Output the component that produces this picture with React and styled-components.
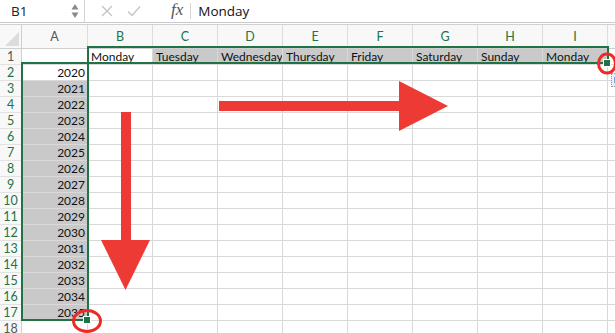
import React from "react";
import styled, { createGlobalStyle } from "styled-components";

const Global = createGlobalStyle`
  html, body { margin: 0; padding: 0; background: #fff; }
  body { font-family: Lato, "Liberation Sans", sans-serif; overflow: hidden; }
`;

const GREEN = "#217346";
const GRID = "#d9d9d9";

const Page = styled.div`
  position: relative;
  width: 615px;
  height: 333px;
  overflow: hidden;
  background: #fff;
`;

const FormulaBar = styled.div`
  display: flex;
  align-items: stretch;
  height: 22px;
  border-bottom: 1px solid #c9c9c9;
  margin-bottom: 1px;
`;

const NameBox = styled.div`
  width: 85px;
  box-sizing: border-box;
  display: flex;
  align-items: center;
  justify-content: space-between;
  padding: 0 5px 0 11px;
  border-right: 1px solid #d4d4d4;
  font-family: "Open Sans", "Liberation Sans", sans-serif;
  font-size: 13.5px;
  color: #222;
`;

const ToolIcons = styled.div`
  display: flex;
  align-items: center;
  gap: 14px;
  padding-left: 16px;
  width: 79px;
  box-sizing: border-box;
`;

const Fx = styled.div`
  font-family: "Liberation Serif", serif;
  font-style: italic;
  font-size: 17px;
  color: #555;
  display: flex;
  align-items: center;
  padding: 0 7px 2px 7px;
  margin: 3px 0;
  border-right: 1px solid #d4d4d4;
`;

const FormulaText = styled.div`
  display: flex;
  align-items: center;
  padding-left: 7px;
  font-family: "Open Sans", "Liberation Sans", sans-serif;
  font-size: 13.5px;
  color: #111;
`;

const Sheet = styled.div`
  display: grid;
  grid-template-columns: 22px 66px repeat(8, 65px) 40px;
  grid-template-rows: 24px repeat(18, 16px);
  border-top: 1px solid #d0d0d0;
`;

const Corner = styled.div`
  position: relative;
  background: #f8f8f8;
  border-right: 1px solid #cfcfcf;
  border-bottom: 1px solid #cfcfcf;
  box-sizing: border-box;
  &::after {
    content: "";
    position: absolute;
    right: 2px;
    bottom: 2px;
    width: 0;
    height: 0;
    border-left: 14px solid transparent;
    border-bottom: 14px solid #dcdcdc;
  }
`;

const ColHead = styled.div`
  background: #f8f8f8;
  box-sizing: border-box;
  border-right: 1px solid #dcdcdc;
  border-bottom: 1px solid #cfcfcf;
  display: flex;
  align-items: center;
  justify-content: center;
  font-size: 12.5px;
  color: ${(p) => (p.$active ? GREEN : "#555")};
`;

const RowHead = styled.div`
  background: #f8f8f8;
  box-sizing: border-box;
  border-right: 1px solid #cfcfcf;
  border-bottom: 1px solid #e2e2e2;
  display: flex;
  align-items: center;
  justify-content: center;
  font-size: 12.5px;
  line-height: 14px;
  color: ${(p) => (p.$active ? GREEN : "#555")};
`;

const Cell = styled.div`
  box-sizing: border-box;
  border-right: 1px solid ${GRID};
  border-bottom: 1px solid ${GRID};
  background: ${(p) => (p.$fill ? "#c9c9c9" : "#fff")};
  display: flex;
  align-items: center;
  justify-content: ${(p) => (p.$right ? "flex-end" : "flex-start")};
  padding: 0 2px 0 3px;
  font-size: 12px;
  line-height: 14px;
  color: #111;
  white-space: nowrap;
  overflow: hidden;
`;

const Selection = styled.div`
  position: absolute;
  border: 2px solid ${GREEN};
  box-sizing: border-box;
  pointer-events: none;
`;

const Handle = styled.div`
  position: absolute;
  width: 6px;
  height: 6px;
  background: ${GREEN};
  border: 1px solid #fff;
  box-sizing: content-box;
`;

const FillOptions = styled.div`
  position: absolute;
  left: 611px;
  top: 73px;
  width: 8px;
  height: 12px;
  border: 1px dotted #9a9a9a;
  background: #e8eef8;
  &::after {
    content: "";
    position: absolute;
    left: 2px;
    top: 3px;
    width: 5px;
    height: 6px;
    background: #7ea6e0;
  }
`;

const Overlay = styled.svg`
  position: absolute;
  left: 0;
  top: 0;
  pointer-events: none;
`;

const cols = ["A", "B", "C", "D", "E", "F", "G", "H", "I", ""];
const days = ["Monday", "Tuesday", "Wednesday", "Thursday", "Friday", "Saturday", "Sunday", "Monday"];

export default function App() {
  const rows = [];
  for (let r = 1; r <= 18; r++) {
    rows.push(
      <RowHead key={`rh${r}`} $active={r >= 2 && r <= 17}>
        {r}
      </RowHead>
    );
    cols.forEach((c, ci) => {
      let content = "";
      let fill = false;
      let right = false;
      if (ci === 0 && r >= 2 && r <= 17) {
        content = String(2018 + r);
        right = true;
        fill = r >= 3;
      }
      if (r === 1 && ci >= 1 && ci <= 8) {
        content = days[ci - 1];
        fill = ci >= 2;
      }
      rows.push(
        <Cell key={`c${r}-${ci}`} $fill={fill} $right={right}>
          {content}
        </Cell>
      );
    });
  }

  return (
    <Page>
      <Global />
      <FormulaBar>
        <NameBox>
          <span>B1</span>
          <svg width="8" height="16" viewBox="0 0 8 16">
            <polygon points="4,1 7.5,6.5 0.5,6.5" fill="#8a8a8a" />
            <polygon points="4,15 7.5,9.5 0.5,9.5" fill="#8a8a8a" />
          </svg>
        </NameBox>
        <ToolIcons>
          <svg width="12" height="12" viewBox="0 0 12 12">
            <path d="M1 1 L11 11 M11 1 L1 11" stroke="#c4c4c4" strokeWidth="1.4" />
          </svg>
          <svg width="14" height="12" viewBox="0 0 14 12">
            <path d="M1 6.5 L5 10.5 L13 1.5" stroke="#c4c4c4" strokeWidth="1.4" fill="none" />
          </svg>
        </ToolIcons>
        <Fx>fx</Fx>
        <FormulaText>Monday</FormulaText>
      </FormulaBar>
      <Sheet>
        <Corner />
        {cols.map((c, i) => (
          <ColHead key={`h${i}`} $active={i >= 1 && i <= 8}>
            {c}
          </ColHead>
        ))}
        {rows}
      </Sheet>

      <Selection style={{ left: 21, top: 62, width: 68, height: 259 }} />
      <Selection style={{ left: 87, top: 46, width: 522, height: 18 }} />
      <Handle style={{ left: 83, top: 316 }} />
      <Handle style={{ left: 603, top: 59 }} />
      <FillOptions />

      <Overlay width="615" height="333" viewBox="0 0 615 333">
        <g fill="#ee3a35">
          <rect x="121" y="112" width="10" height="130" />
          <polygon points="101,240 150,240 125.5,290" />
          <rect x="219" y="101" width="182" height="10" />
          <polygon points="399,81 399,131 448,106" />
        </g>
        <g fill="none" stroke="#ee2a24" strokeWidth="3">
          <ellipse cx="87" cy="321" rx="13.5" ry="10.5" />
          <ellipse cx="607" cy="63.5" rx="8.5" ry="9.5" />
        </g>
      </Overlay>
    </Page>
  );
}
